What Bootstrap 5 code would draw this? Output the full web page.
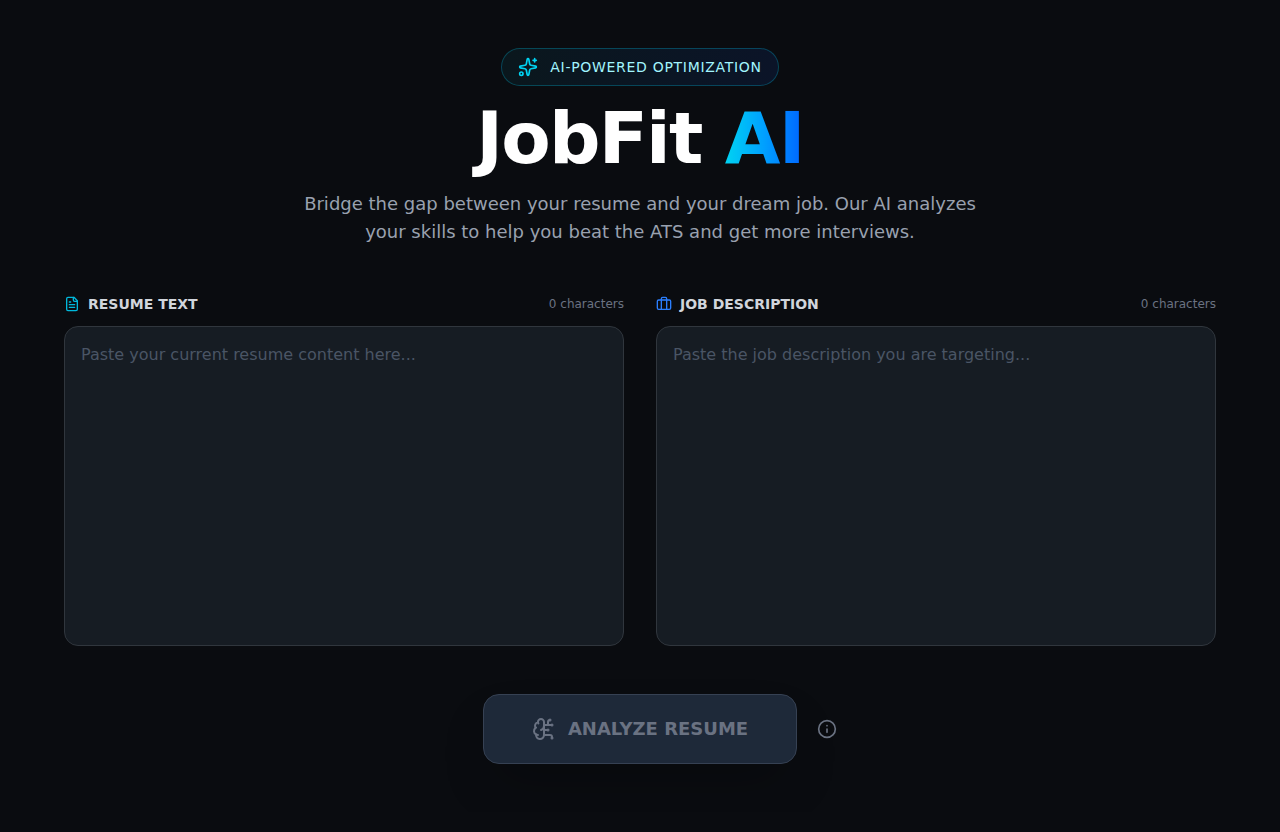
<!DOCTYPE html>
<html lang="en">
<head>
<meta charset="utf-8">
<meta name="viewport" content="width=device-width, initial-scale=1">
<title>JobFit AI</title>
<link href="https://cdn.jsdelivr.net/npm/bootstrap@5.3.0/dist/css/bootstrap.min.css" rel="stylesheet">
<style>
body { background: #0a0c10; color: #d1d5dc; font-family: "DejaVu Sans", sans-serif; }
.page-wrap { max-width: 1280px; padding: 48px 64px; }
svg { fill: none; stroke: currentColor; stroke-width: 2; stroke-linecap: round; stroke-linejoin: round; flex-shrink: 0; }
.pill { gap: 12px; padding: 8px 16px; border: 1px solid rgba(0, 184, 219, .3); background: linear-gradient(90deg, #0a171d, #0b1428); color: #a2f4fd; font-size: 14px; line-height: 20px; letter-spacing: .05em; }
.pill svg { color: #00d3f2; }
.hero-title { margin: 16px 0; color: #fff; font-size: 72px; line-height: 72px; font-weight: 700; letter-spacing: -.025em; }
.hero-title span { background: linear-gradient(90deg, #00d3f2, #009fff 50%, #0064ff); -webkit-background-clip: text; background-clip: text; color: transparent; }
.hero-text { max-width: 672px; color: #99a1af; font-size: 18px; line-height: 28px; }
.inputs { --bs-gutter-x: 32px; --bs-gutter-y: 32px; margin-top: 16px; }
.field-head { margin-bottom: 12px; line-height: 20px; }
.field-head label { gap: 8px; color: #d1d5dc; font-size: 14px; font-weight: 600; }
.count { color: #6a7282; font-size: 12px; }
.cyan { color: #00b8db; }
.blue { color: #2b7fff; }
textarea.form-control, textarea.form-control:focus { height: 320px; padding: 16px; border: 1px solid #30363d; border-radius: 14px; background: #161c23; color: #d1d5dc; font-size: 16px; line-height: 24px; resize: none; }
textarea.form-control::placeholder { color: #4a5565; }
.actions { display: grid; grid-template-columns: 1fr auto 1fr; align-items: center; gap: 20px; margin-top: 48px; }
.btn.analyze { grid-column: 2; gap: 12px; padding: 20px 48px; border: 1px solid #364153; border-radius: 16px; background: #1e2939; color: #6a7282; font-size: 18px; line-height: 28px; font-weight: 700; opacity: 1; box-shadow: 0 25px 50px -12px rgba(0, 0, 0, .25); }
.btn.info { justify-self: start; padding: 0; border: 0; color: #6a7282; line-height: 0; }
</style>
</head>
<body>
<main class="page-wrap container-fluid">
  <header class="d-flex flex-column align-items-center text-center">
    <div class="pill d-inline-flex align-items-center rounded-pill">
      <svg width="20" height="20" viewBox="0 0 24 24" aria-hidden="true"><path d="M11.017 2.814a1 1 0 0 1 1.966 0l1.051 5.558a2 2 0 0 0 1.594 1.594l5.558 1.051a1 1 0 0 1 0 1.966l-5.558 1.051a2 2 0 0 0-1.594 1.594l-1.051 5.558a1 1 0 0 1-1.966 0l-1.051-5.558a2 2 0 0 0-1.594-1.594l-5.558-1.051a1 1 0 0 1 0-1.966l5.558-1.051a2 2 0 0 0 1.594-1.594z"/><path d="M20 2v4M22 4h-4"/><circle cx="4" cy="20" r="2"/></svg>
      <span>AI-POWERED OPTIMIZATION</span>
    </div>
    <h1 class="hero-title">JobFit <span>AI</span></h1>
    <p class="hero-text">Bridge the gap between your resume and your dream job. Our AI analyzes your skills to help you beat the ATS and get more interviews.</p>
  </header>
  <form>
    <div class="row inputs">
      <div class="col-12 col-lg-6 mt-3">
        <div class="field-head d-flex justify-content-between align-items-center">
          <label class="d-flex align-items-center" for="resume"><svg class="cyan" width="16" height="16" viewBox="0 0 24 24" aria-hidden="true"><path d="M15 2H6a2 2 0 0 0-2 2v16a2 2 0 0 0 2 2h12a2 2 0 0 0 2-2V7Z"/><path d="M14 2v4a2 2 0 0 0 2 2h4M10 9H8M16 13H8M16 17H8"/></svg>RESUME TEXT</label>
          <span class="count">0 characters</span>
        </div>
        <textarea class="form-control" id="resume" placeholder="Paste your current resume content here..."></textarea>
      </div>
      <div class="col-12 col-lg-6 mt-3">
        <div class="field-head d-flex justify-content-between align-items-center">
          <label class="d-flex align-items-center" for="job"><svg class="blue" width="16" height="16" viewBox="0 0 24 24" aria-hidden="true"><path d="M16 20V4a2 2 0 0 0-2-2h-4a2 2 0 0 0-2 2v16"/><rect width="20" height="14" x="2" y="6" rx="2"/></svg>JOB DESCRIPTION</label>
          <span class="count">0 characters</span>
        </div>
        <textarea class="form-control" id="job" placeholder="Paste the job description you are targeting..."></textarea>
      </div>
    </div>
    <div class="actions">
      <button class="btn analyze d-flex align-items-center" type="submit" disabled>
        <svg width="24" height="24" viewBox="0 0 24 24" aria-hidden="true"><path d="M12 5a3 3 0 1 0-5.997.125 4 4 0 0 0-2.526 5.77 4 4 0 0 0 .556 6.588A4 4 0 1 0 12 18Z"/><path d="M9 13a4.5 4.5 0 0 0 3-4M6.003 5.125A3 3 0 0 0 6.401 6.5M3.477 10.896a4 4 0 0 1 .585-.396M6 18a4 4 0 0 1-1.967-.516M12 13h4M12 18h6a2 2 0 0 1 2 2v1M12 8h8M16 8V5a2 2 0 0 1 2-2"/><circle cx="16" cy="13" r=".5"/><circle cx="18" cy="3" r=".5"/><circle cx="20" cy="21" r=".5"/><circle cx="20" cy="8" r=".5"/></svg>
        ANALYZE RESUME
      </button>
      <button class="btn info" type="button" aria-label="Information"><svg width="20" height="20" viewBox="0 0 24 24" aria-hidden="true"><circle cx="12" cy="12" r="10"/><path d="M12 16v-4M12 8h.01"/></svg></button>
    </div>
  </form>
</main>
<script src="https://cdn.jsdelivr.net/npm/bootstrap@5.3.0/dist/js/bootstrap.bundle.min.js"></script>
</body>
</html>
